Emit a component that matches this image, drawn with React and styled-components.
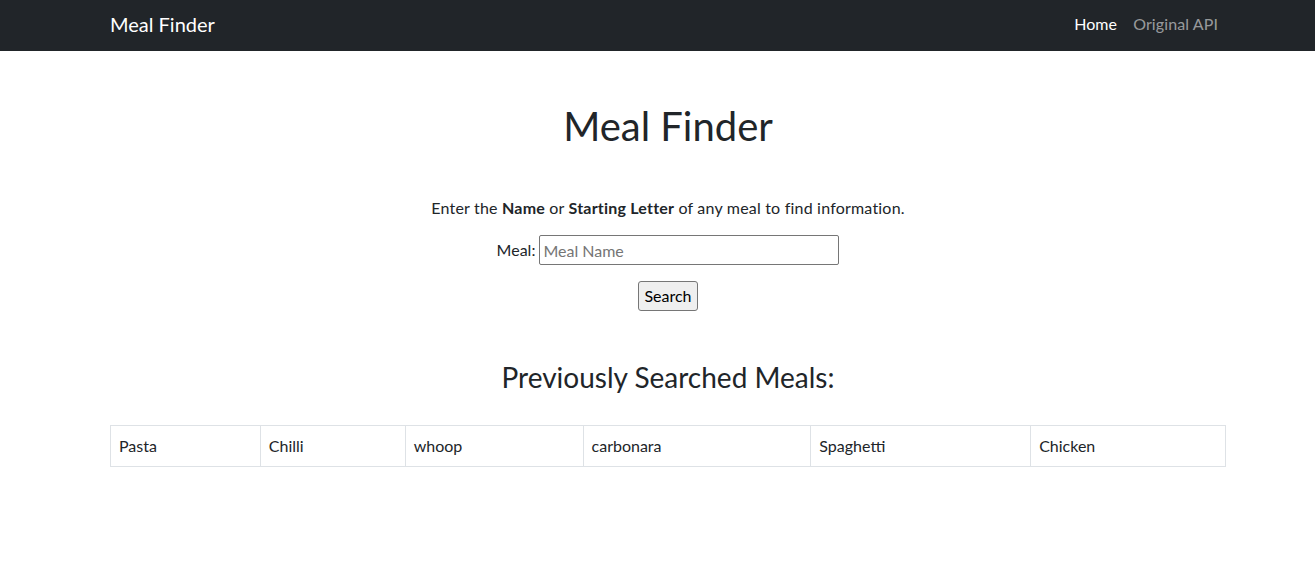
import React from "react";
import styled, { createGlobalStyle } from "styled-components";

const Global = createGlobalStyle`
  html, body { margin: 0; padding: 0; background: #fff; }
  body {
    font-family: "Segoe UI", Lato, "Liberation Sans", sans-serif;
    font-size: 16px;
    line-height: 1.5;
    color: #212529;
  }
  * { box-sizing: border-box; }
`;

const Navbar = styled.nav`
  background: #212529;
  height: 51px;
  padding-bottom: 3px;
  display: flex;
  align-items: center;
`;

const Container = styled.div`
  margin: 0 89px 0 110px;
  flex: 1;
  display: flex;
  align-items: center;
  justify-content: space-between;
`;

const Brand = styled.a`
  font-size: 20px;
  line-height: 30px;
  color: #fff;
  text-decoration: none;
`;

const NavList = styled.div`
  display: flex;
`;

const NavLink = styled.a`
  padding: 8px;
  font-size: 16px;
  line-height: 24px;
  text-decoration: none;
  letter-spacing: 0.1px;
  color: ${(p) => (p.$active ? "#fff" : "rgba(255,255,255,0.55)")};
`;

const Main = styled.main`
  margin: 0 89px 0 110px;
  display: flex;
  flex-direction: column;
  align-items: center;
  padding-top: 51px;
`;

const Title = styled.h1`
  margin: 0;
  font-size: 40px;
  font-weight: 400;
  line-height: 48px;
`;

const Intro = styled.p`
  margin: 46px 0 0;
  line-height: 24px;
  letter-spacing: 0.2px;
`;

const FormRow = styled.div`
  margin-top: 15px;
  display: flex;
  align-items: center;
  gap: 4px;
`;

const Label = styled.label`
  line-height: 24px;
`;

const Input = styled.input`
  width: 300px;
  height: 30px;
  border: 1px solid #767676;
  border-radius: 2px;
  padding: 1px 3px;
  font: inherit;
  font-size: 16px;
  color: #212529;
  &::placeholder { color: #757575; }
`;

const Button = styled.button`
  margin-top: 16px;
  height: 30px;
  padding: 1px 5px;
  font: inherit;
  font-size: 16px;
  color: #000;
  background: #efefef;
  border: 1px solid #767676;
  border-radius: 3px;
`;

const SubTitle = styled.h3`
  margin: 49px 0 0;
  font-size: 28px;
  font-weight: 400;
  line-height: 34px;
`;

const Table = styled.table`
  margin-top: 31px;
  width: 100%;
  border-collapse: collapse;
`;

const Cell = styled.td`
  border: 1px solid #dee2e6;
  padding: 8px;
  line-height: 24px;
  text-align: left;
  width: ${(p) => p.$w}px;
`;

const meals = [
  ["Pasta", 150],
  ["Chilli", 145],
  ["whoop", 178],
  ["carbonara", 228],
  ["Spaghetti", 220],
  ["Chicken", 195],
];

export default function App() {
  return (
    <>
      <Global />
      <Navbar>
        <Container>
          <Brand href="#">Meal Finder</Brand>
          <NavList>
            <NavLink href="#" $active>Home</NavLink>
            <NavLink href="#">Original API</NavLink>
          </NavList>
        </Container>
      </Navbar>
      <Main>
        <Title>Meal Finder</Title>
        <Intro>
          Enter the <b>Name</b> or <b>Starting Letter</b> of any meal to find information.
        </Intro>
        <FormRow>
          <Label htmlFor="meal">Meal:</Label>
          <Input id="meal" placeholder="Meal Name" />
        </FormRow>
        <Button>Search</Button>
        <SubTitle>Previously Searched Meals:</SubTitle>
        <Table>
          <tbody>
            <tr>
              {meals.map(([m, w]) => (
                <Cell key={m} $w={w}>{m}</Cell>
              ))}
            </tr>
          </tbody>
        </Table>
      </Main>
    </>
  );
}
